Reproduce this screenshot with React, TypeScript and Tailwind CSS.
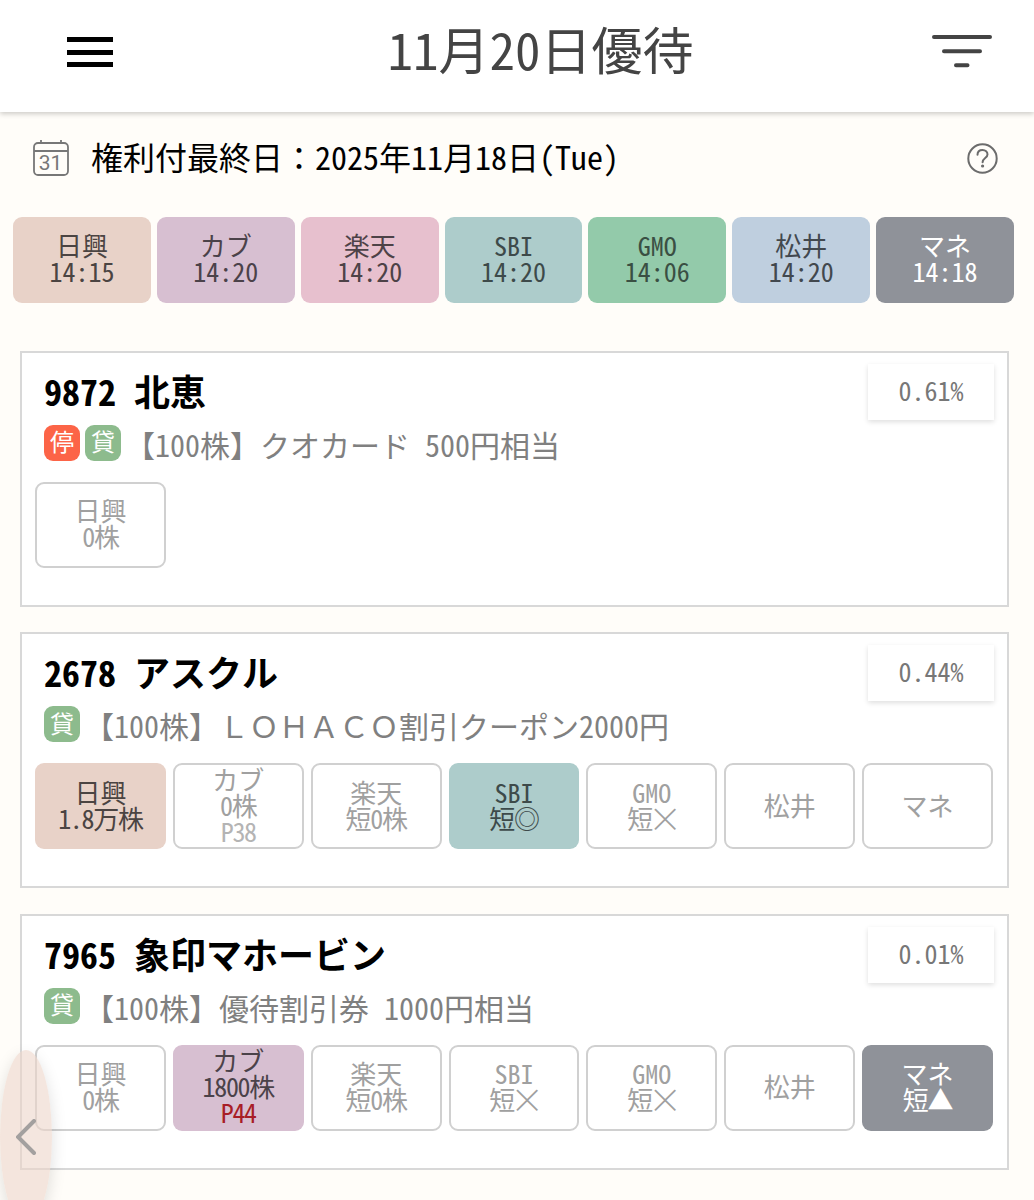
import React from "react";

type Tone = "nikko" | "kabu" | "rakuten" | "sbi" | "gmo" | "matsui" | "mane" | "off";

const toneClass: Record<Tone, string> = {
  nikko: "bg-[#e8d2c8] text-[#4b4442]",
  kabu: "bg-[#d7bfd1] text-[#4b4249]",
  rakuten: "bg-[#e7c0ce] text-[#4d4247]",
  sbi: "bg-[#adcccb] text-[#3d4a4a]",
  gmo: "bg-[#93caaa] text-[#3a4f43]",
  matsui: "bg-[#bfcfdf] text-[#42484e]",
  mane: "bg-[#8f9299] text-white",
  off: "border-2 border-[#d0d0d0] bg-white text-[#a0a0a0]",
};

interface Chip {
  name: string;
  tone: Tone;
  stock?: string;
  premium?: string;
}

interface Stock {
  title: string;
  rate: string;
  suspended?: boolean;
  detail: string;
  chips: Chip[];
}

const brokers: { name: string; time: string; tone: Tone }[] = [
  { name: "日興", time: "14:15", tone: "nikko" },
  { name: "カブ", time: "14:20", tone: "kabu" },
  { name: "楽天", time: "14:20", tone: "rakuten" },
  { name: "SBI", time: "14:20", tone: "sbi" },
  { name: "GMO", time: "14:06", tone: "gmo" },
  { name: "松井", time: "14:20", tone: "matsui" },
  { name: "マネ", time: "14:18", tone: "mane" },
];

const stocks: Stock[] = [
  {
    title: "9872 北恵",
    rate: "0.61%",
    suspended: true,
    detail: "【100株】クオカード 500円相当",
    chips: [{ name: "日興", stock: "0株", tone: "off" }],
  },
  {
    title: "2678 アスクル",
    rate: "0.44%",
    detail: "【100株】ＬＯＨＡＣＯ割引クーポン2000円",
    chips: [
      { name: "日興", stock: "1.8万株", tone: "nikko" },
      { name: "カブ", stock: "0株", premium: "P38", tone: "off" },
      { name: "楽天", stock: "短0株", tone: "off" },
      { name: "SBI", stock: "短◎", tone: "sbi" },
      { name: "GMO", stock: "短×", tone: "off" },
      { name: "松井", tone: "off" },
      { name: "マネ", tone: "off" },
    ],
  },
  {
    title: "7965 象印マホービン",
    rate: "0.01%",
    detail: "【100株】優待割引券 1000円相当",
    chips: [
      { name: "日興", stock: "0株", tone: "off" },
      { name: "カブ", stock: "1800株", premium: "P44", tone: "kabu" },
      { name: "楽天", stock: "短0株", tone: "off" },
      { name: "SBI", stock: "短×", tone: "off" },
      { name: "GMO", stock: "短×", tone: "off" },
      { name: "松井", tone: "off" },
      { name: "マネ", stock: "短▲", tone: "mane" },
    ],
  },
];

function Header() {
  return (
    <header className="relative flex h-28 items-start justify-between bg-white pr-[42px] pl-[67px] shadow-[0_2px_5px_rgba(0,0,0,0.2)]">
      <button aria-label="メニュー" className="mt-[37px] flex flex-col gap-[7.5px]">
        <span className="h-[5px] w-[46px] bg-black" />
        <span className="h-[5px] w-[46px] bg-black" />
        <span className="h-[5px] w-[46px] bg-black" />
      </button>
      <h1 className="mt-[18px] ml-[36px] text-[51px] leading-[60px] whitespace-nowrap text-[#444]">11月20日優待</h1>
      <button aria-label="絞り込み" className="mt-[35px]">
        <svg width="60" height="34" viewBox="0 0 60 34" fill="none" stroke="#444" strokeWidth="4" strokeLinecap="round">
          <path d="M2 2H58M12 16.2H48M24 30.3H35.500" />
        </svg>
      </button>
    </header>
  );
}

function RightsDate() {
  return (
    <section className="flex h-[92px] items-center pr-9 pl-[33px]">
      <svg width="36" height="36" viewBox="0 0 36 36" fill="none" stroke="#777" strokeWidth="1.8">
        <rect x="1" y="3" width="34" height="32" rx="4" />
        <path d="M1 11H35M8 0V4M28 0V4" />
        <text x="17.500" y="29.500" textAnchor="middle" fontSize="21" fontFamily="Roboto" fill="#777" stroke="none">
          31
        </text>
      </svg>
      <p className="mb-[5px] ml-[22px] text-[32px] leading-10 whitespace-nowrap text-black">権利付最終日：2025年11月18日(Tue)</p>
      <svg className="ml-auto" width="31" height="31" viewBox="0 0 31 31" fill="none" stroke="#6c6c6c" strokeWidth="2">
        <circle cx="15.500" cy="15.500" r="14.200" />
        <path d="M10.500 11.800C10.500 8.700 12.500 7 15.500 7C18.500 7 20.500 8.900 20.500 11.500C20.500 15 15.600 15.200 15.600 19.300" strokeLinecap="round" />
        <circle cx="15.600" cy="23" r="1" fill="#6c6c6c" stroke="none" />
        <circle cx="15.600" cy="23" r=".6" />
      </svg>
    </section>
  );
}

function BrokerTimes() {
  return (
    <section className="grid grid-cols-7 gap-[6px] pt-[12.5px] pr-5 pl-[13px]">
      {brokers.map((b) => (
        <div key={b.name} className={`flex h-[86px] flex-col items-center justify-center rounded-[9px] pb-[3px] text-[26px] leading-[26px] ${toneClass[b.tone]}`}>
          <span>{b.name}</span>
          <span>{b.time}</span>
        </div>
      ))}
    </section>
  );
}

function StockAmount({ value }: { value: string }) {
  if (!value.endsWith("×")) {
    return <span className="tracking-[-1.3px]">{value}</span>;
  }
  return (
    <span className="flex tracking-[-1.3px]">
      {value.slice(0, -1)}
      <span className="scale-[1.3] font-['Noto_Sans_CJK_JP',sans-serif] font-light">×</span>
    </span>
  );
}

function StockChip({ chip }: { chip: Chip }) {
  const premiumColor = chip.tone === "off" ? "text-[#b4b4b4]" : "text-[#a81d27]";
  return (
    <div className={`flex h-[86px] flex-col items-center justify-center rounded-[9px] pb-[3px] text-[26px] leading-[26px] whitespace-nowrap ${toneClass[chip.tone]}`}>
      <span>{chip.name}</span>
      {chip.stock && <StockAmount value={chip.stock} />}
      {chip.premium && <span className={`tracking-[-1.3px] ${premiumColor}`}>{chip.premium}</span>}
    </div>
  );
}

function Tag({ label, className }: { label: string; className: string }) {
  return (
    <span className={`flex size-9 shrink-0 items-center justify-center rounded-[9px] pb-[3px] text-2xl leading-6 text-white ${className}`}>
      {label}
    </span>
  );
}

function StockCard({ stock }: { stock: Stock }) {
  return (
    <article className="h-64 border-2 border-[#d8d8d8] bg-white pr-[14px] pl-[13px]">
      <div className="flex h-[72px] items-start justify-between pt-[11px] pl-[9px]">
        <h2 className="pt-[6px] text-[36px] leading-10 font-bold whitespace-nowrap text-black">{stock.title}</h2>
        <div className="-mr-px flex h-14 w-[126px] items-center justify-center bg-white pb-[5px] text-[26px] text-[#777] shadow-[0_2px_5px_rgba(0,0,0,0.13)]">
          {stock.rate}
        </div>
      </div>
      <div className="flex h-[57px] items-start pl-[9px]">
        <div className="flex gap-[5px]">
          {stock.suspended && <Tag label="停" className="bg-[#fc6447]" />}
          <Tag label="貸" className="bg-[#8dbb8d]" />
        </div>
        <p className="ml-[4px] text-[30px] leading-[38px] whitespace-nowrap text-[#808080]">{stock.detail}</p>
      </div>
      <div className="grid grid-cols-7 gap-[7px]">
        {stock.chips.map((c) => (
          <StockChip key={c.name} chip={c} />
        ))}
      </div>
    </article>
  );
}

export default function App() {
  return (
    <div
      lang="ja"
      className="relative h-[1200px] w-[1034px] overflow-hidden bg-[#fffdf9] font-['Noto_Sans_Mono_CJK_JP','Noto_Sans_CJK_JP',monospace]"
    >
      <Header />
      <RightsDate />
      <BrokerTimes />
      <main className="mt-[48.1px] flex flex-col gap-[25.7px] pr-[25px] pl-5">
        {stocks.map((s) => (
          <StockCard key={s.title} stock={s} />
        ))}
      </main>
      <button
        aria-label="戻る"
        className="absolute top-[1050px] left-0 flex h-[174px] w-[52px] items-center justify-center rounded-[50%] bg-[#ecd5ca]/60 shadow-[0_6px_16px_rgba(0,0,0,0.13)]"
      >
        <svg width="20" height="36" viewBox="0 0 20 36" fill="none" stroke="#a3a09f" strokeWidth="4" strokeLinecap="round">
          <path d="M18 2L2 18L18 34" />
        </svg>
      </button>
    </div>
  );
}
